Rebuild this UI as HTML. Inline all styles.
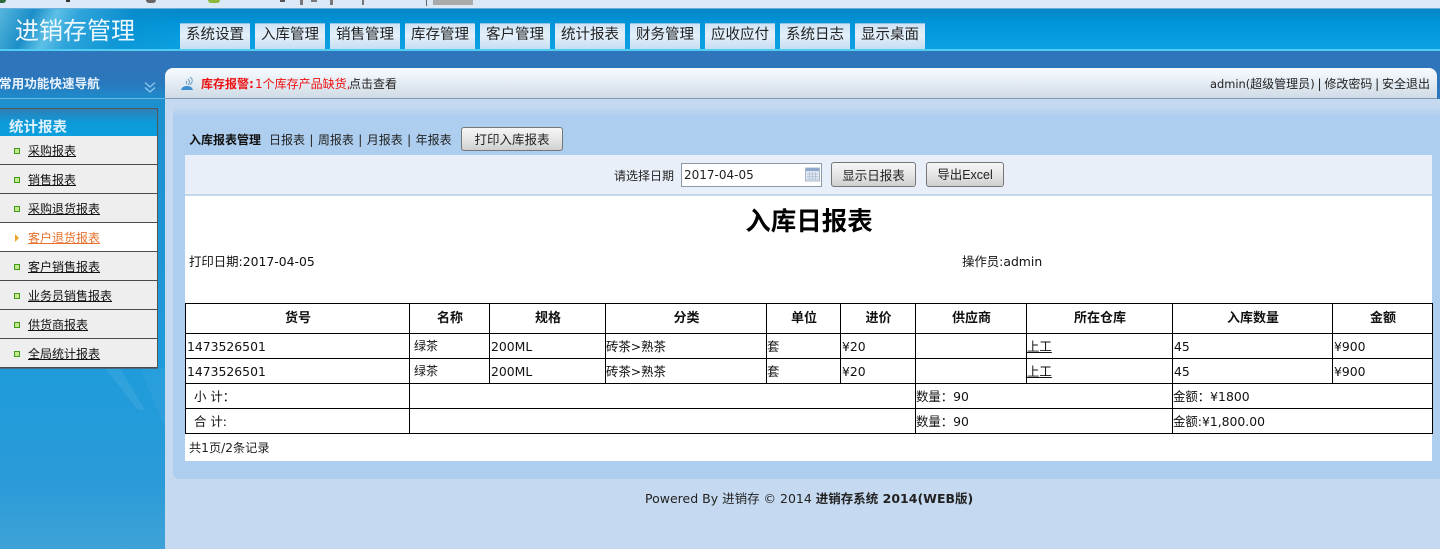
<!DOCTYPE html>
<html lang="zh-CN">
<head>
<meta charset="utf-8">
<title>入库日报表</title>
<style>
html,body{margin:0;padding:0;width:1440px;height:549px;overflow:hidden;background:#c5d9f0}
body{position:relative;font-family:"DejaVu Sans","WenQuanYi Zen Hei","Noto Sans CJK SC",sans-serif;font-size:12px;color:#111}
div,span,a,table,i,td,th{box-sizing:border-box}
.a{position:absolute}
.t{position:absolute;white-space:nowrap;line-height:16px}
.tab{position:absolute;top:23px;width:70px;height:26px;background:linear-gradient(#cfe3f5,#e4f0fa 45%,#c6def3);border-top:1px solid #8fc4e4;text-align:center;font-size:14.5px;line-height:23px;color:#222}
.item{position:absolute;left:0;width:157px;height:29px;background:#eeeeee;border-bottom:1px solid #4a4a4a}
.item i{position:absolute;left:14px;top:12px;width:6px;height:6px;background:#c8e890;border:1.5px solid #3f9c18}
.item a{position:absolute;left:28px;top:7px;font-size:12px;line-height:16px;color:#111;text-decoration:underline;white-space:nowrap}
.item.on{background:#fff}
.item.on a{color:#e8702a}
.item.on i{left:15px;top:11px;width:0;height:0;background:none;border:0;border-left:4px solid #eaa42a;border-top:4px solid transparent;border-bottom:4px solid transparent}
.btn{position:absolute;background:linear-gradient(#f6f6f6,#e4e4e4 55%,#cfcfcf);border:1px solid #777;border-radius:3px;text-align:center;font-size:12.5px;color:#222}
table{position:absolute;left:185px;top:303px;width:1247px;border-collapse:collapse;table-layout:fixed;background:#fff}
td,th{border:1px solid #000;padding:0 0 0 1px;font-size:12.4px;font-weight:normal;text-align:left;white-space:nowrap;overflow:hidden;height:25px;line-height:23px;color:#111}
th{text-align:center;font-weight:bold;font-size:13px;height:30px;line-height:29px}
td.c{padding-left:4px;font-size:12px}
td.z{padding-left:0}
</style>
</head>
<body>
<!-- browser strip -->
<div class="a" style="left:0;top:0;width:1440px;height:9px;background:#dbe8f6;border-bottom:1px solid #6aaedb"></div>
<div class="a" style="left:0;top:0;width:6px;height:3px;background:#2a6a3a;border-radius:0 0 4px 0"></div>
<div class="a" style="left:66px;top:0;width:4px;height:2px;background:#333"></div>
<div class="a" style="left:146px;top:0;width:10px;height:3px;background:#666;border-radius:0 0 5px 5px"></div>
<div class="a" style="left:208px;top:0;width:12px;height:3px;background:#8cb93a;border-radius:0 0 6px 6px"></div>
<div class="a" style="left:280px;top:0;width:5px;height:2px;background:#555"></div>
<div class="a" style="left:300px;top:0;width:3px;height:5px;background:#777"></div>
<div class="a" style="left:311px;top:0;width:6px;height:2px;background:#777"></div>
<div class="a" style="left:330px;top:0;width:3px;height:5px;background:#777"></div>
<div class="a" style="left:362px;top:0;width:2px;height:5px;background:#777"></div>
<div class="a" style="left:426px;top:0;width:1px;height:6px;background:#666"></div>
<div class="a" style="left:433px;top:0;width:40px;height:5px;background:#aaaaaa"></div>

<!-- header -->
<div class="a" style="left:0;top:9px;width:1440px;height:42px;background:linear-gradient(#0586c6,#0095da 35%,#0a9fe0 90%);border-bottom:2px solid #52cdf2"></div>
<div class="a" style="left:0;top:9px;width:175px;height:40px;background:linear-gradient(115deg,#55b6dd 0,#1c8ec8 18%,#5cc0e6 30%,#2fa4da 42%,rgba(15,143,204,.5) 70%,rgba(5,134,198,0) 100%)"></div>
<div class="t" style="left:15px;top:17px;font-size:24px;line-height:28px;color:#eef8ff">进销存管理</div>
<div class="tab" style="left:180px">系统设置</div>
<div class="tab" style="left:255px">入库管理</div>
<div class="tab" style="left:330px">销售管理</div>
<div class="tab" style="left:405px">库存管理</div>
<div class="tab" style="left:480px">客户管理</div>
<div class="tab" style="left:555px">统计报表</div>
<div class="tab" style="left:630px">财务管理</div>
<div class="tab" style="left:705px">应收应付</div>
<div class="tab" style="left:780px">系统日志</div>
<div class="tab" style="left:855px">显示桌面</div>

<!-- blue band -->
<div class="a" style="left:0;top:51px;width:1440px;height:48px;background:#2f75bb"></div>

<!-- sidebar -->
<div class="a" style="left:0;top:98px;width:165px;height:451px;background:linear-gradient(#1d8fcf,#1f9bdb 60%,#2a9bd8 85%,#3fa2d8)"></div>
<svg class="a" style="left:100px;top:368px" width="65" height="80"><polygon points="5,0 20,0 45,42 38,42" fill="#fff" opacity=".07"/><polygon points="40,0 65,0 65,60" fill="#fff" opacity=".04"/></svg>
<div class="a" style="left:0;top:68px;width:165px;height:31px;background:linear-gradient(#2f75bb,#2a78bd 50%,#1d8bcb);border-bottom:1px solid #6fb7e0"></div>
<div class="t" style="left:-1px;top:75px;font-size:12.6px;line-height:17px;font-weight:bold;color:#eaf4fc">常用功能快速导航</div>
<svg class="a" style="left:144px;top:81px" width="12" height="13" viewBox="0 0 12 13" fill="none" stroke="#8cc8ec" stroke-width="1.3"><path d="M1 1.500 6 6 11 1.500M1 6.500 6 11 11 6.500"/></svg>

<div class="a" style="left:0;top:108px;width:158px;height:261px;background:#555;border-bottom:1px solid #4a6a85"></div>
<div class="a" style="left:0;top:109px;width:157px;height:27px;background:linear-gradient(#2f7fb8,#0d9ad8 50%,#0a9edd)"></div>
<div class="t" style="left:9px;top:119px;font-size:14.5px;line-height:18px;font-weight:bold;color:#dff2fc">统计报表</div>
<div class="item" style="top:136px"><i></i><a>采购报表</a></div>
<div class="item" style="top:165px"><i></i><a>销售报表</a></div>
<div class="item" style="top:194px"><i></i><a>采购退货报表</a></div>
<div class="item on" style="top:223px"><i></i><a>客户退货报表</a></div>
<div class="item" style="top:252px"><i></i><a>客户销售报表</a></div>
<div class="item" style="top:281px"><i></i><a>业务员销售报表</a></div>
<div class="item" style="top:310px"><i></i><a>供货商报表</a></div>
<div class="item" style="top:339px"><i></i><a>全局统计报表</a></div>

<!-- main -->
<div class="a" style="left:165px;top:99px;width:1275px;height:450px;background:#c5d9f0"></div>
<div class="a" style="left:165px;top:68px;width:1272px;height:31px;background:linear-gradient(#f4fafe,#eef4f9 25%,#cfdbe6);border-bottom:1px solid #7f9cb6;border-radius:8px 8px 0 0"></div>
<svg class="a" style="left:180px;top:76px" width="14" height="15" viewBox="0 0 14 15" fill="none"><path d="M1 14c1-3 3-4 6-4s5 1 6 4z" fill="#3f8fd0"/><path d="M6 8c1-1 1-2 0-3M8 9c2-2 2-4 0-6M10 9c3-3 3-6 0-8" stroke="#6a9cc8" stroke-width="1"/></svg>
<div class="t" style="left:201px;top:76px;font-size:12px;font-weight:bold;color:#ee1111">库存报警:</div>
<div class="t" style="left:255px;top:76px;font-size:12px;color:#ee1111">1个库存产品缺货,</div>
<div class="t" style="left:349px;top:76px;font-size:12px;color:#222">点击查看</div>
<div class="t" style="right:10px;top:76px;font-size:12px;color:#222;word-spacing:-1px"><span style="font-size:11.4px">admin(</span>超级管理员<span style="font-size:11.4px">)</span> | 修改密码 | 安全退出</div>

<div class="a" style="left:173px;top:107px;width:1267px;height:372px;background:linear-gradient(#c3d9f1,#aeceef 9px);border-radius:6px 0 0 6px"></div>
<div class="t" style="left:189px;top:132px;font-size:12px;font-weight:bold">入库报表管理</div>
<div class="t" style="left:269px;top:132px;font-size:12px;color:#222;word-spacing:.6px">日报表 | 周报表 | 月报表 | 年报表</div>
<div class="btn" style="left:461px;top:127px;width:102px;height:24px;line-height:23px">打印入库报表</div>

<div class="a" style="left:185px;top:155px;width:1247px;height:306px;background:#fff"></div>
<div class="a" style="left:185px;top:155px;width:1247px;height:41px;background:#e9eff8;border-bottom:2px solid #c6d7ea"></div>
<div class="t" style="left:614px;top:168px;font-size:12px;color:#222">请选择日期</div>
<div class="a" style="left:681px;top:163px;width:141px;height:24px;background:#fff;border:1px solid #8a9aa8;padding-left:2px;line-height:23px;font-size:12px;color:#222">2017-04-05</div>
<svg class="a" style="left:805px;top:167px" width="15" height="15" viewBox="0 0 15 15"><rect x="0.500" y="1" width="14" height="13" fill="#dfe6f2" stroke="#aab8cc"/><rect x="1" y="1" width="13" height="3" fill="#8fa8cc"/><path d="M2 7h11M2 9.500h11M2 12h11M4.500 5v8M7.500 5v8M10.500 5v8" stroke="#b4c2d6" stroke-width=".8"/></svg>
<div class="btn" style="left:831px;top:162px;width:85px;height:25px;line-height:25px">显示日报表</div>
<div class="btn" style="left:926px;top:162px;width:78px;height:25px;line-height:25px;font-family:'Liberation Sans','WenQuanYi Zen Hei',sans-serif">导出Excel</div>

<div class="t" style="left:185px;width:1248px;top:207px;text-align:center;font-size:25.5px;line-height:30px;font-weight:bold;color:#000">入库日报表</div>
<div class="t" style="left:189px;top:254px;font-size:12.4px">打印日期:2017-04-05</div>
<div class="t" style="left:962px;top:254px;font-size:12.4px">操作员:admin</div>

<table>
<colgroup><col style="width:224px"><col style="width:80px"><col style="width:116px"><col style="width:161px"><col style="width:74px"><col style="width:75px"><col style="width:111px"><col style="width:146px"><col style="width:160px"><col style="width:100px"></colgroup>
<tr><th>货号</th><th>名称</th><th>规格</th><th>分类</th><th>单位</th><th>进价</th><th>供应商</th><th>所在仓库</th><th>入库数量</th><th>金额</th></tr>
<tr><td>1473526501</td><td class="c">绿茶</td><td>200ML</td><td class="z">砖茶&gt;熟茶</td><td class="z">套</td><td>¥20</td><td></td><td class="z"><u>上工</u></td><td>45</td><td>¥900</td></tr>
<tr><td>1473526501</td><td class="c">绿茶</td><td>200ML</td><td class="z">砖茶&gt;熟茶</td><td class="z">套</td><td>¥20</td><td></td><td class="z"><u>上工</u></td><td>45</td><td>¥900</td></tr>
<tr><td style="padding-left:8px">小 计：</td><td colspan="5"></td><td colspan="2" class="z">数量：90</td><td colspan="2" class="z">金额：¥1800</td></tr>
<tr><td style="padding-left:8px">合 计:</td><td colspan="5"></td><td colspan="2" class="z">数量：90</td><td colspan="2" class="z">金额:¥1,800.00</td></tr>
</table>
<div class="t" style="left:189px;top:440px;font-size:12.2px;color:#222">共1页/2条记录</div>

<div class="t" style="left:645px;top:491px;font-size:12.5px;color:#222">Powered By 进销存 © 2014 <b>进销存系统 2014(WEB版)</b></div>
</body>
</html>
